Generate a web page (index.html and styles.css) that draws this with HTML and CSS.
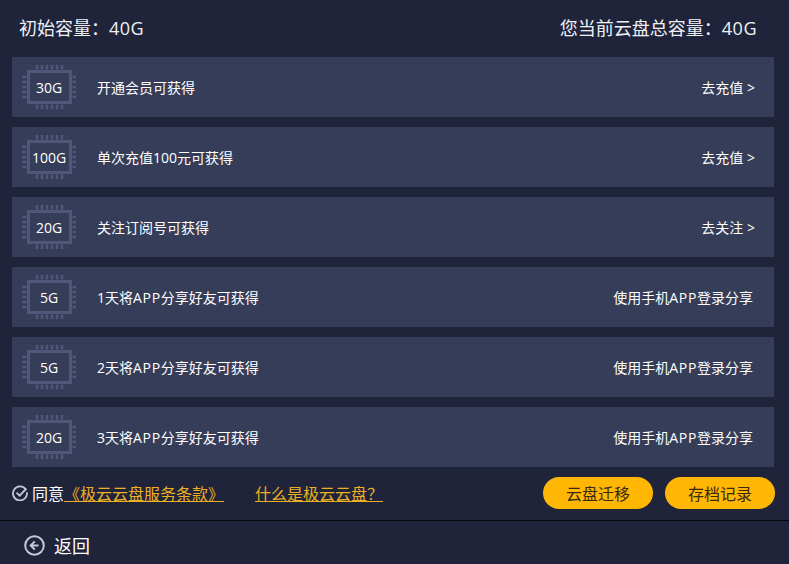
FILE: index.html
```html
<!DOCTYPE html>
<html lang="zh-CN">
<head>
<meta charset="utf-8">
<title>云盘容量</title>
<link rel="stylesheet" href="styles.css">
</head>
<body>
<svg class="defs" width="0" height="0" aria-hidden="true">
  <symbol id="chip" viewBox="0 0 54 44">
    <rect x="6.5" y="6.5" width="42" height="31" fill="none" stroke="#50577a" stroke-width="3"/>
    <path d="M15 0v4.500M20 0v4.500M25 0v4.500M30 0v4.500M35 0v4.500M40 0v4.500M15 39.500v4.500M20 39.500v4.500M25 39.500v4.500M30 39.500v4.500M35 39.500v4.500M40 39.500v4.500M0 12h4.500M0 17h4.500M0 22h4.500M0 27h4.500M0 32h4.500M50.500 12h3.500M50.500 17h3.500M50.500 22h3.500M50.500 27h3.500M50.500 32h3.500" stroke="#50577a" stroke-width="2.400" fill="none"/>
  </symbol>
</svg>
<main class="page">
  <header class="summary">
    <span>初始容量：<span class="size">40G</span></span>
    <span>您当前云盘总容量：<span class="size">40G</span></span>
  </header>
  <section class="rows">
    <div class="row">
      <div class="chip"><svg class="chip-icon"><use href="#chip"/></svg><span>30G</span></div>
      <span class="label">开通会员可获得</span>
      <span class="action go">去充值 &gt;</span>
    </div>
    <div class="row">
      <div class="chip"><svg class="chip-icon"><use href="#chip"/></svg><span>100G</span></div>
      <span class="label">单次充值100元可获得</span>
      <span class="action go">去充值 &gt;</span>
    </div>
    <div class="row">
      <div class="chip"><svg class="chip-icon"><use href="#chip"/></svg><span>20G</span></div>
      <span class="label">关注订阅号可获得</span>
      <span class="action go">去关注 &gt;</span>
    </div>
    <div class="row">
      <div class="chip"><svg class="chip-icon"><use href="#chip"/></svg><span>5G</span></div>
      <span class="label">1天将<span class="latin">APP</span>分享好友可获得</span>
      <span class="action app">使用手机<span class="latin">APP</span>登录分享</span>
    </div>
    <div class="row">
      <div class="chip"><svg class="chip-icon"><use href="#chip"/></svg><span>5G</span></div>
      <span class="label">2天将<span class="latin">APP</span>分享好友可获得</span>
      <span class="action app">使用手机<span class="latin">APP</span>登录分享</span>
    </div>
    <div class="row">
      <div class="chip"><svg class="chip-icon"><use href="#chip"/></svg><span>20G</span></div>
      <span class="label">3天将<span class="latin">APP</span>分享好友可获得</span>
      <span class="action app">使用手机<span class="latin">APP</span>登录分享</span>
    </div>
  </section>
  <section class="terms">
    <svg class="check" viewBox="0 0 16 16"><path d="M13.6 4.200A7 7 0 1 0 15 8" fill="none" stroke="#c4c8d6" stroke-width="1.800" stroke-linecap="round"/><path d="M4.600 7.600 7.600 10.600 14.400 3.600" fill="none" stroke="#c4c8d6" stroke-width="2"/></svg>
    <span class="agree">同意</span><a class="link">《极云云盘服务条款》</a>
    <a class="link second">什么是极云云盘？</a>
    <span class="buttons">
      <button class="pill">云盘迁移</button>
      <button class="pill">存档记录</button>
    </span>
  </section>
  <footer class="back">
    <svg class="back-icon" viewBox="0 0 21 21"><circle cx="10.500" cy="10.500" r="9.300" fill="none" stroke="#c4c8d6" stroke-width="2"/><path d="M10.800 6.400 6.700 10.500l4.100 4.100M7 10.500h7.500" fill="none" stroke="#c4c8d6" stroke-width="2"/></svg>
    <span>返回</span>
  </footer>
</main>
</body>
</html>
```
FILE: styles.css
```css
* { box-sizing: border-box; }
html, body { margin: 0; padding: 0; }
body {
  width: 789px;
  height: 564px;
  overflow: hidden;
  background: #1f243a;
  color: #fff;
  font-family: "Open Sans", "Noto Sans CJK SC", sans-serif;
}
.defs { position: absolute; }
.page { display: flex; flex-direction: column; height: 564px; }
.summary {
  height: 57px;
  padding: 0 32px 3px 19px;
  display: flex;
  align-items: center;
  justify-content: space-between;
  font-size: 18px;
  color: #eef0f5;
}
.size { letter-spacing: 0.5px; }
.rows { display: flex; flex-direction: column; gap: 10px; padding: 0 15px 0 12px; }
.row {
  height: 60px;
  padding: 0 20px 0 10px;
  display: flex;
  align-items: center;
  background: #363d59;
  font-size: 14px;
}
.chip {
  position: relative;
  width: 54px;
  height: 44px;
  display: flex;
  align-items: center;
  justify-content: center;
  flex: none;
}
.chip-icon { position: absolute; left: 0; top: 0; width: 54px; height: 44px; }
.chip span { position: relative; }
.label { margin-left: 21px; flex: 1; }
.latin { letter-spacing: 0.7px; }
.go { margin-right: -1px; }
.app { margin-right: 1px; }
.terms {
  height: 54px;
  padding: 0 14px 1px 12px;
  display: flex;
  align-items: center;
  border-bottom: 1px solid #05060c;
  font-size: 16px;
}
.check { width: 16px; height: 16px; margin-right: 4px; }
.link { color: #edb022; text-decoration: underline; }
.second { margin-left: 31px; }
.buttons { margin-left: auto; display: flex; gap: 12px; }
.pill {
  width: 110px;
  height: 32px;
  padding: 0;
  border: 0;
  border-radius: 16px;
  background: #ffb703;
  color: #3a2a10;
  font: inherit;
}
.back {
  flex: 1;
  padding: 5px 0 0 24px;
  display: flex;
  align-items: center;
  gap: 9px;
  font-size: 18px;
}
.back-icon { width: 21px; height: 21px; }
```
